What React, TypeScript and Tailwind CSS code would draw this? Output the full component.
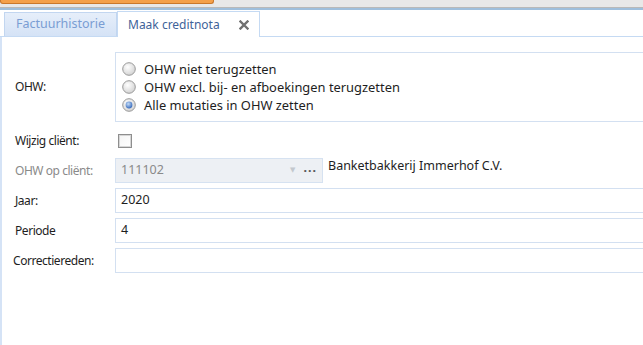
import React from "react";

function Radio({ checked }: { checked?: boolean }) {
  return (
    <svg width="14" height="14" viewBox="0 0 14 14" className="shrink-0">
      <defs>
        <radialGradient id={checked ? "rg1" : "rg0"} cx="40%" cy="35%" r="70%">
          <stop offset="0%" stopColor="#ffffff" />
          <stop offset="100%" stopColor="#d0d0d0" />
        </radialGradient>
        <radialGradient id="dot" cx="40%" cy="35%" r="70%">
          <stop offset="0%" stopColor="#c4dcf8" />
          <stop offset="100%" stopColor="#2f64b8" />
        </radialGradient>
      </defs>
      <circle cx="7" cy="7" r="6.3" fill={`url(#${checked ? "rg1" : "rg0"})`} stroke="#9a9a9a" strokeWidth="1" />
      {checked && <circle cx="7" cy="7" r="3.4" fill="url(#dot)" />}
    </svg>
  );
}

const font = "font-['Noto_Sans','DejaVu_Sans',sans-serif]";
const label = "w-[113px] pl-[13px] text-[12px] tracking-[-0.45px]";

export default function App() {
  return (
    <div className={`w-[643px] h-[345px] bg-white overflow-hidden ${font} text-[12.5px] text-[#1e1e1e] flex flex-col`}>
      {/* top bar */}
      <div className="h-[8px] bg-[#e8e8e8] border-b border-[#b9b9b9] relative shrink-0">
        <div className="absolute left-0 top-0 w-[214px] h-[4px] bg-[#f4a04a] border border-t-0 border-[#c9782c] rounded-b-[3px]" />
      </div>
      <div className="h-[2px] bg-[#9fbfdc] shrink-0" />
      {/* tabs */}
      <div className="h-[27px] flex items-end pl-[4px] border-b border-[#c5daf3] shrink-0">
        <div className="h-[24px] w-[113px] flex items-center justify-center bg-gradient-to-b from-[#e6eefa] to-[#d5e3f6] border border-b-0 border-[#c2d6f0] text-[#7a9dd3] text-[12.5px]">
          Factuurhistorie
        </div>
        <div className="h-[26px] w-[143px] flex items-center bg-white border border-b-0 border-[#c5daf3] text-[#3f6399] text-[12px] pl-[10px] -mb-px">
          <span>Maak creditnota</span>
          <svg width="10" height="10" viewBox="0 0 10 10" className="ml-auto mr-[10px]">
            <path d="M1.5 1.5 L8.5 8.5 M8.5 1.5 L1.5 8.5" stroke="#707070" strokeWidth="2.4" strokeLinecap="square" />
          </svg>
        </div>
      </div>
      {/* content */}
      <div className="flex-1 border-l-2 border-[#d5e3f6] pt-[15px] flex flex-col">
        <div className="flex items-center h-[70px]">
          <div className={label}>OHW:</div>
          <div className="flex-1 h-[70px] border border-r-0 border-[#d3e0f1] flex flex-col justify-center pl-[6px] gap-[1px] leading-[17px] text-[12.9px]">
            <div className="flex items-center gap-[8px]"><Radio />OHW niet terugzetten</div>
            <div className="flex items-center gap-[8px]"><Radio />OHW excl. bij- en afboekingen terugzetten</div>
            <div className="flex items-center gap-[8px]"><Radio checked />Alle mutaties in OHW zetten</div>
          </div>
        </div>
        <div className="flex items-center h-[25px] mt-[6px]">
          <div className={label}>Wijzig cliënt:</div>
          <div className="ml-[3px] w-[14px] h-[14px] border border-[#8e8e8e] bg-gradient-to-br from-[#f4f4f4] to-[#ffffff] shadow-[inset_0_0_0_1px_#d6d6d6]" />
        </div>
        <div className="flex items-center h-[25px] mt-[5px]">
          <div className={`${label} text-[#8a8a8a]`}>OHW op cliënt:</div>
          <div className="w-[208px] h-[25px] bg-[#edf0f4] border border-[#d6e2f1] flex items-center pl-[5px] text-[#8a8a8a]">
            <span>111102</span>
            <span className="ml-auto text-[#c3c8ce] text-[7px] mr-[8px]">▼</span>
            <span className="mr-[5px] text-[#555] font-bold tracking-[1px] leading-none -mt-[5px]">...</span>
          </div>
          <div className="ml-[5px] -mt-[8px]">Banketbakkerij Immerhof C.V.</div>
        </div>
        {[["Jaar:", "2020"], ["Periode", "4"], ["Correctiereden:", ""]].map(([l, v]) => (
          <div key={l} className="flex items-center h-[25px] mt-[5px]">
            <div className={l === "Correctiereden:" ? `${label} !pl-[11px]` : label}>{l}</div>
            <div className="flex-1 h-[25px] border border-r-0 border-[#d3e0f1] flex items-center pl-[5px]">{v}</div>
          </div>
        ))}
      </div>
    </div>
  );
}
